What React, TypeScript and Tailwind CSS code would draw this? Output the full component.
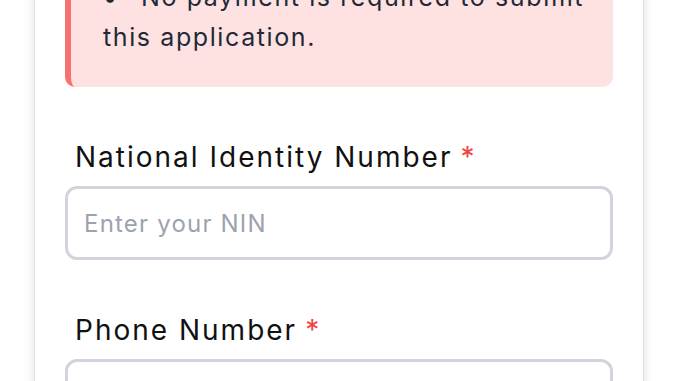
import React from "react";

function Field({ label, placeholder }: { label: string; placeholder: string }) {
  return (
    <div className="flex flex-col">
      <label className="pl-[10px] text-[28px] leading-[39px] text-[#111111] tracking-[2px]">
        {label}
        <span className="ml-[8px] text-[#ef4444]">*</span>
      </label>
      <input
        type="text"
        placeholder={placeholder}
        className="mt-[9px] h-[74px] w-full rounded-[12px] border-[3px] border-[#d1d5db] bg-white px-[16px] text-[24px] leading-[36px] text-[#111111] outline-none placeholder:text-[#9ca3af] tracking-[1.2px]"
      />
    </div>
  );
}

export default function App() {
  return (
    <div
      className="min-h-screen bg-white px-[34px]"
      style={{ fontFamily: "Inter, 'Noto Sans', sans-serif" }}
    >
      <div className="-mt-[84px] rounded-[12px] border-[1.5px] border-[#dcdfe4] bg-white p-[30px] shadow-[0_0_12px_rgba(0,0,0,0.12)]">
        <div className="rounded-[10px] border-l-[6px] border-[#f87171] bg-[#fee2e2] py-[30px] pl-[32px] pr-[28px]">
          <p className="text-[25px] leading-[40px] text-[#1f2937] tracking-[1.6px]">
            <span className="inline-block w-[38px]">•</span>No payment is required to submit this application.
          </p>
        </div>
        <div className="mt-[51px] flex flex-col gap-[51px]">
          <Field label="National Identity Number" placeholder="Enter your NIN" />
          <Field label="Phone Number" placeholder="Enter your phone number" />
          <Field label="Email Address" placeholder="Enter your email" />
        </div>
      </div>
    </div>
  );
}
